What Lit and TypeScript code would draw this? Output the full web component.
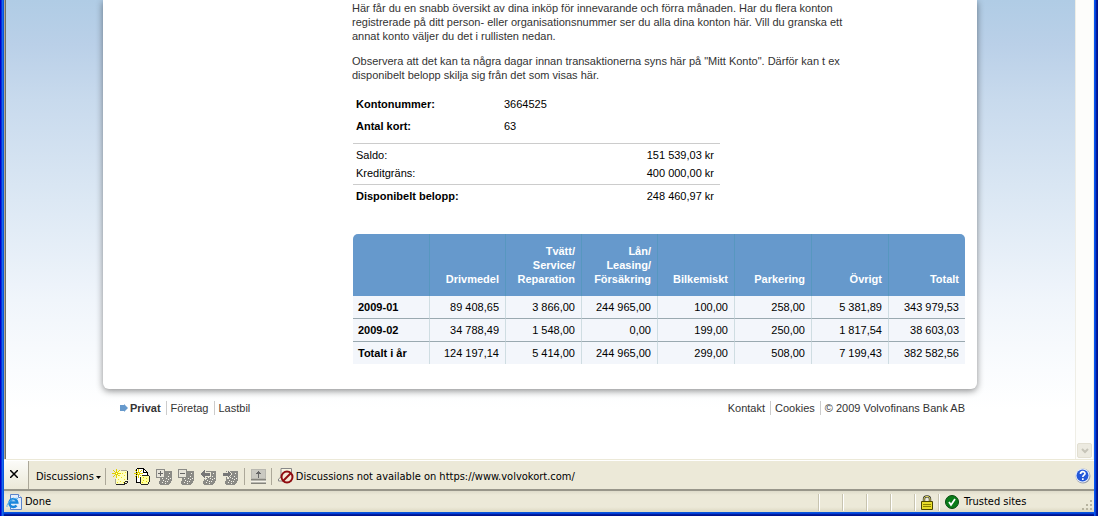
import { LitElement, html, css, svg } from "lit";
import { customElement } from "lit/decorators.js";

const columns = ["Drivmedel", "Tvätt/\nService/\nReparation", "Lån/\nLeasing/\nFörsäkring", "Bilkemiskt", "Parkering", "Övrigt", "Totalt"];

const rows = [
  { label: "2009-01", values: ["89 408,65", "3 866,00", "244 965,00", "100,00", "258,00", "5 381,89", "343 979,53"] },
  { label: "2009-02", values: ["34 788,49", "1 548,00", "0,00", "199,00", "250,00", "1 817,54", "38 603,03"] },
  { label: "Totalt i år", values: ["124 197,14", "5 414,00", "244 965,00", "299,00", "508,00", "7 199,43", "382 582,56"] },
];

const spark = svg`<path d="M0 5h9v1H0zM4 1h1v9H4zM1 2h1v1H1zM2 3h1v1H2zM3 4h1v1H3zM7 2h1v1H7zM6 3h1v1H6zM5 4h1v1H5zM3 6h1v1H3zM2 7h1v1H2zM1 8h1v1H1zM5 6h1v1H5zM6 7h1v1H6z" fill="#e0d000"/><path d="M4 5h1v1H4z" fill="#fff"/>`;

const greyPage = svg`<path d="M4 3h12v9l-1 2-2 3H4l-1-3 1-2z" fill="#8b8b86"/><path d="M6 10h1v1H6zM8 9h1v1H8zM10 10h1v1h-1zM12 8h1v1h-1zM7 12h1v1H7zM9 13h1v1H9zM12 11h1v1h-1zM13 5h1v1h-1zM11 13h1v1h-1zM6 14h1v1H6zM14 10h1v1h-1zM9 15h1v1H9z" fill="#f5f3ea"/>`;

const icons = {
  newNote: svg`<path d="M4 3h11v10l-2 3H4l-1-2 1-2z" fill="#ffffc0"/><path d="M7 7h1v1H7zM10 5h1v1h-1zM12 7h1v1h-1zM9 9h1v1H9zM12 11h1v1h-1zM6 11h1v1H6zM8 13h1v1H8zM11 14h1v1h-1zM5 14h1v1H5zM13 4h1v1h-1z" fill="#f0e020"/><path d="M15 3h1v9h-1zM4 16h9v1H4zM12 14h1v2h-1zM13 13h2v1h-2zM15 13h1v2h-1zM13 15h2v1h-2z" fill="#222"/><path d="M3 11h1v5H3zM9 2h6v1H9z" fill="#aaa894"/>${spark}`,
  newDoc: svg`<path d="M3 1h7l3 3v10H3z" fill="#fff"/><path d="M3 0h7v1H3zM2 1h1v13H2zM2 14h5v1H2zM9 1h1v3h3v1H9zM10 1h1v1h-1zM11 2h1v1h-1zM12 3h1v1h-1zM13 4h1v3h-1z" fill="#000"/><path d="M7 7h8v9H7z" fill="#ffff9c"/><path d="M8 7h7v1H8zM15 8h1v6h-1zM7 16h7v1H7zM6 9h1v7H6zM14 14h1v2h-1z" fill="#222"/><path d="M9 9h1v1H9zM12 10h1v1h-1zM9 12h1v1H9zM12 13h1v1h-1zM8 14h1v1H8z" fill="#e0d000"/>${spark}`,
  expand: svg`${greyPage}<path d="M0 1h9v9H0z" fill="#8b8b86"/><path d="M1 2h7v7H1z" fill="#e6e4da"/><path d="M2 5h5v1H2zM4 3h1v5H4z" fill="#666"/>`,
  collapse: svg`${greyPage}<path d="M0 1h9v9H0z" fill="#8b8b86"/><path d="M1 2h7v7H1z" fill="#e6e4da"/><path d="M2 5h5v1H2z" fill="#666"/>`,
  previous: svg`${greyPage}<path d="M0 6l5-5v3h5v4H5v3z" fill="#777" stroke="#ece9d8"/>`,
  next: svg`${greyPage}<path d="M10 6L5 1v3H0v4h5v3z" fill="#777" stroke="#ece9d8"/>`,
  pane: svg`<path d="M0 1h15v15H0z" fill="#b9b8b0"/><path d="M1 2h13v8H1z" fill="#cac9c1"/><path d="M0 11h15v1H0zM0 15h15v1H0z" fill="#85847c"/><path d="M0 13h15v1H0z" fill="#f5f3ea"/><path d="M7 3h1v1h1v1h1v1H8v4H7V6H5V5h1V4h1z" fill="#666"/>`,
};

@customElement("app-root")
export class AppRoot extends LitElement {
  static styles = css`
    :host { display: block; min-height: 100vh; color: #000; font: 11px/14px "Liberation Sans", Arial, sans-serif; }
    * { box-sizing: border-box; }
    button { font: inherit; color: inherit; background: none; border: 0; padding: 0; margin: 0; display: block; }
    a { color: inherit; text-decoration: none; }
    svg { display: block; flex: none; }
    .window {
      min-height: 100vh; display: flex; flex-direction: column; padding: 0 4px 4px;
      background:
        linear-gradient(to right, #0000c8 1px, #0831d9 1px 2px, #166aee 2px 3px, #0855dd 3px) left / 4px 100% no-repeat,
        linear-gradient(to left, #00138c 1px, #001ea0 1px 2px, #0441d8 2px 3px, #0855ee 3px) right / 4px 100% no-repeat,
        linear-gradient(to top, #00138c 1px, #001ea0 1px 2px, #0441d8 2px 3px, #0855dd 3px) bottom / 100% 4px no-repeat;
    }
    .viewport { flex: 1; display: flex; border-bottom: 1px solid #ece9d8; background: #fff; }
    .page {
      flex: 1; min-width: 0; border-left: 1px solid #aca899; box-shadow: inset 1px 0 #716f64; padding-bottom: 44px;
      background: linear-gradient(#b0cce5 0, #bad0e8 45px, #c8daed 100px, #dce8f4 200px, #f0f5fb 300px, #fafcfe 370px, #fff 410px);
    }
    .card {
      width: 100%; max-width: 874px; margin: 0 auto; padding: 1px 12px 25px 249px;
      background: #fff; border-radius: 0 0 6px 6px; box-shadow: 0 2px 7px rgba(0, 0, 0, 0.45);
    }
    .intro { max-width: 500px; color: #333; }
    p { margin: 0 0 11px; }
    .account { width: 368px; color: #000; }
    .line { display: flex; justify-content: space-between; line-height: 18px; padding: 0 6px 0 4px; }
    .fact { display: grid; grid-template-columns: 148px 1fr; line-height: 22px; padding-left: 4px; }
    dl, dd { margin: 0; }
    dt { font-weight: bold; }
    .balance { margin: 6px 0 0 1px; border-top: 1px solid #ccc; padding-top: 2px; width: 367px; }
    .balance .line { padding-left: 3px; }
    .balance dt { font-weight: normal; }
    .balance .sum { border-top: 1px solid #ccc; margin-top: 2px; padding-top: 2px; }
    .balance .sum dt { font-weight: bold; }
    .purchases {
      width: calc(100% - 1px); margin: 29px 0 0 1px; table-layout: fixed; border-collapse: separate; border-spacing: 0;
      background: #f3f6fb; border-radius: 5px 5px 0 0; overflow: hidden;
    }
    .narrow { width: 76px; }
    .purchases th, .purchases td { padding: 4px 6px; text-align: right; border-left: 1px solid #cfdde2; }
    .purchases th:first-child { text-align: left; border-left: 0; padding-left: 5px; }
    .purchases thead th {
      height: 62px; padding: 10px 6px 10px 0; vertical-align: bottom; color: #fff; white-space: pre-line;
      background: #6699cc; border-left-color: #5797c0;
    }
    .purchases tbody tr + tr > * { border-top: 1px solid #9aa9b0; }
    .footer {
      width: 100%; max-width: 874px; margin: 0 auto; padding: 12px 12px 0 17px;
      display: flex; justify-content: space-between; color: #333;
    }
    .links { display: flex; align-items: center; }
    .links > * { padding: 0 5px 0 4px; border-left: 1px solid #ccc; }
    .links > :first-child { border-left: 0; }
    .links > :last-child { padding-right: 0; }
    .links .current { display: flex; align-items: center; gap: 2px; font-weight: bold; padding-left: 0; }
    .scroll { width: 19px; display: flex; align-items: flex-end; background: #fdfdfb; border: solid #efeee6; border-width: 0 1px; }
    .scroll button { width: 15px; height: 15px; margin: 0 0 1px 1px; display: grid; place-items: center; border-radius: 2px; background: #eceae0; border: 1px solid #e2dfd2; }
    .bar { display: flex; align-items: center; background: #ece9d8; color: #000; }
    .discuss { height: 31px; padding-top: 2px; border-top: 1px solid #fff; border-bottom: 2px solid #98968a; }
    .close { width: 25px; align-self: stretch; margin-top: -2px; display: grid; place-items: center; border-right: 1px solid #aca899; background: linear-gradient(#fbfbf8, #ece9d8); padding: 0 4px 2px 0; }
    .menu { display: flex; align-items: center; gap: 2px; margin-left: 7px; padding: 2px 4px 0 0; }
    .tools { display: flex; gap: 5px; padding: 0 5px 0 6px; border-left: 1px solid #aca899; height: 17px; }
    .tools + .tools { padding-right: 3px; }
    .message { display: flex; align-items: center; gap: 2px; padding-left: 6px; border-left: 1px solid #aca899; height: 17px; }
    .message span { padding-top: 2px; }
    .help { margin-left: auto; padding-right: 3px; }
    .status { height: 21px; padding-top: 1px; background: linear-gradient(#dedbca, #ece9d8 4px 16px, #dcd8c2); }
    .state { display: flex; align-items: center; gap: 3px; padding-left: 2px; flex: 1; }
    .cell { width: 24px; height: 17px; border-left: 1px solid #c8c4b0; box-shadow: inset 1px 0 #fff; display: grid; place-items: center; }
    .zone { width: 156px; height: 17px; border-left: 1px solid #c8c4b0; box-shadow: inset 1px 0 #fff; display: flex; align-items: center; gap: 5px; padding-left: 6px; }
    .zone .grip { margin-left: auto; align-self: flex-end; }
    .system { font-family: "DejaVu Sans Condensed", "DejaVu Sans", sans-serif; }
  `;

  private tool(label: string, shape: unknown) {
    return html`<button type="button" aria-label=${label}>
      <svg width="17" height="17" viewBox="0 0 17 17" shape-rendering="crispEdges" aria-hidden="true">${shape}</svg>
    </button>`;
  }

  render() {
    return html`
      <div class="window">
        <div class="viewport">
          <div class="page">
            <main class="card">
              <div class="intro">
                <p>Här får du en snabb översikt av dina inköp för innevarande och förra månaden. Har du flera konton registrerade på ditt person- eller organisationsnummer ser du alla dina konton här. Vill du granska ett annat konto väljer du det i rullisten nedan.</p>
                <p>Observera att det kan ta några dagar innan transaktionerna syns här på "Mitt Konto". Därför kan t ex disponibelt belopp skilja sig från det som visas här.</p>
              </div>
              <dl class="account">
                <div class="fact"><dt>Kontonummer:</dt><dd>3664525</dd></div>
                <div class="fact"><dt>Antal kort:</dt><dd>63</dd></div>
              </dl>
              <dl class="balance">
                <div class="line"><dt>Saldo:</dt><dd>151 539,03 kr</dd></div>
                <div class="line"><dt>Kreditgräns:</dt><dd>400 000,00 kr</dd></div>
                <div class="line sum"><dt>Disponibelt belopp:</dt><dd>248 460,97 kr</dd></div>
              </dl>
              <table class="purchases">
                <colgroup><col class="narrow" span="4" /><col span="4" /></colgroup>
                <thead><tr><th></th>${columns.map((c) => html`<th scope="col">${c}</th>`)}</tr></thead>
                <tbody>
                  ${rows.map((r) => html`<tr><th scope="row">${r.label}</th>${r.values.map((v) => html`<td>${v}</td>`)}</tr>`)}
                </tbody>
              </table>
            </main>
            <footer class="footer">
              <nav class="links">
                <a class="current" href="#privat"><svg width="8" height="8" viewBox="0 0 8 8" aria-hidden="true"><path d="M0 1h4V0l4 4-4 4V7H0z" fill="#6699cc"/></svg>Privat</a>
                <a href="#foretag">Företag</a>
                <a href="#lastbil">Lastbil</a>
              </nav>
              <div class="links">
                <a href="#kontakt">Kontakt</a>
                <a href="#cookies">Cookies</a>
                <span>© 2009 Volvofinans Bank AB</span>
              </div>
            </footer>
          </div>
          <div class="scroll">
            <button type="button" aria-label="Scroll down"><svg width="8" height="6" viewBox="0 0 8 6"><path d="M1 1l3 3 3-3" fill="none" stroke="#c6c4b8" stroke-width="2"/></svg></button>
          </div>
        </div>
        <div class="bar discuss system">
          <button class="close" type="button" aria-label="Close"><svg width="8" height="8" viewBox="0 0 8 8"><path d="M0 0l8 8M8 0L0 8" stroke="#000" stroke-width="1.500"/></svg></button>
          <button class="menu" type="button">Discussions<svg width="5" height="3" viewBox="0 0 5 3"><path d="M0 0h5L2.500 3z"/></svg></button>
          <div class="tools">
            ${this.tool("Insert discussion in the document", icons.newNote)}
            ${this.tool("Insert discussion about the document", icons.newDoc)}
            ${this.tool("Expand all", icons.expand)}
            ${this.tool("Collapse all", icons.collapse)}
            ${this.tool("Previous", icons.previous)}
            ${this.tool("Next", icons.next)}
          </div>
          <div class="tools">${this.tool("Show discussion pane", icons.pane)}</div>
          <div class="message">
            <svg width="16" height="16" viewBox="0 0 16 16" aria-hidden="true">
              <path d="M3 .5h10.500V13H.5v-2L3 9z" fill="#f8f6e4" stroke="#888"/>
              <circle cx="9" cy="9" r="5.500" fill="#f4e9d8" stroke="#900c10" stroke-width="2"/>
              <path d="M5 13l8-8" stroke="#900c10" stroke-width="2"/>
            </svg>
            <span>Discussions not available on https://www.volvokort.com/</span>
          </div>
          <button class="help" type="button" aria-label="Help">
            <svg width="16" height="16" viewBox="0 0 16 16">
              <circle cx="8" cy="8" r="7.500" fill="#9aa0ac"/><circle cx="7.500" cy="7.500" r="7" fill="#e8f0ff"/><circle cx="7.500" cy="7.500" r="6" fill="#2458d8"/>
              <path d="M5.500 6c0-3 4.500-3 4.500-.5 0 1.700-2.200 1.500-2.200 3.500M7.800 10.200v1.800" fill="none" stroke="#fff" stroke-width="1.700"/>
            </svg>
          </button>
        </div>
        <div class="bar status system">
          <div class="state">
            <svg width="16" height="16" viewBox="0 0 16 16" aria-hidden="true">
              <path d="M4.500.5h8l3 3v12h-11z" fill="#e4eefc" stroke="#5a84cc"/>
              <path d="M12.500.5v3h3" fill="#fff" stroke="#5a84cc"/>
              <path d="M10.500 11.500a4 4 0 1 1 .8-3H3.500" fill="none" stroke="#1a86dc" stroke-width="2.400"/>
              <path d="M1 13C0 9 8 3 12 4.500" fill="none" stroke="#5ab4f0"/>
            </svg>
            <span>Done</span>
          </div>
          <span class="cell"></span><span class="cell"></span><span class="cell"></span><span class="cell"></span>
          <span class="cell">
            <svg width="12" height="15" viewBox="0 0 12 15" aria-hidden="true">
              <path d="M3 7V4c0-3.500 6-3.500 6 0v3" fill="none" stroke="#333" stroke-width="2.400"/>
              <path d="M3 7V4c0-3.500 6-3.500 6 0v3" fill="none" stroke="#e8e060"/>
              <path d="M.5 6.500h11v8H.5z" fill="#e8dc28" stroke="#4a4600"/>
              <path d="M2 9.500h8M2 11.500h8" stroke="#8a8200"/>
            </svg>
          </span>
          <div class="zone">
            <svg width="14" height="14" viewBox="0 0 14 14" aria-hidden="true"><circle cx="7" cy="7" r="6.500" fill="#0a7c18" stroke="#044a0c"/><path d="M4 7l2 3 4-6" fill="none" stroke="#fff" stroke-width="1.800"/></svg>
            <span>Trusted sites</span>
            <svg class="grip" width="12" height="12" viewBox="0 0 12 12" aria-hidden="true"><path d="M8 1h2v2H8zM4 5h2v2H4zM8 5h2v2H8zM0 9h2v2H0zM4 9h2v2H4zM8 9h2v2H8z" fill="#b8b4a0"/></svg>
          </div>
        </div>
      </div>
    `;
  }
}
